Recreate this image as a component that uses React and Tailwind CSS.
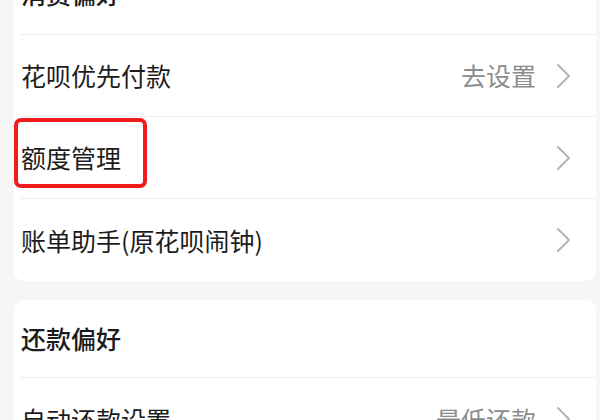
const font = { fontFamily: '"Noto Sans CJK SC", "Noto Sans", sans-serif' };

function Chevron() {
  return (
    <svg className="w-[16px] h-[26px] shrink-0" viewBox="0 0 16 26" fill="none">
      <path d="M2 2l11 11L2 24" stroke="#b5b5b5" strokeWidth="2" strokeLinecap="round" strokeLinejoin="round" />
    </svg>
  );
}

function Row({ label, value, boxed, last }) {
  return (
    <div className={`relative h-[82px] flex items-center pr-[24px] ${last ? "" : "border-b border-[#ececec]"}`}>
      <span className="text-[25px] leading-none text-[#1c1c1c] flex-1">{label}</span>
      {value && <span className="text-[25px] leading-none text-[#8c8c8c] mr-[20px]">{value}</span>}
      <Chevron />
      {boxed && (
        <div className="absolute left-[-7px] top-[1px] w-[133px] h-[70px] border-[4px] border-[#f01c1c] rounded-[7px]" />
      )}
    </div>
  );
}

export default function App() {
  return (
    <div className="w-[600px] h-[420px] overflow-hidden bg-[#f6f6f6] pl-[14px] pr-[4px]" style={font}>
      {/* 消费偏好 */}
      <div className="bg-white rounded-[10px] pl-[7px] -mt-[47px]">
        <div className="h-[82px] flex items-center border-b border-[#ececec]">
          <span className="text-[25px] leading-none font-medium text-[#1c1c1c]">消费偏好</span>
        </div>
        <Row label="花呗优先付款" value="去设置" />
        <Row label="额度管理" boxed />
        <Row label="账单助手(原花呗闹钟)" last />
      </div>

      {/* 还款偏好 */}
      <div className="bg-white rounded-[10px] pl-[7px] mt-[19px]">
        <div className="h-[78px] flex items-center border-b border-[#ececec]">
          <span className="text-[25px] leading-none font-medium text-[#1c1c1c]">还款偏好</span>
        </div>
        <Row label="自动还款设置" value="最低还款" last />
      </div>
    </div>
  );
}
